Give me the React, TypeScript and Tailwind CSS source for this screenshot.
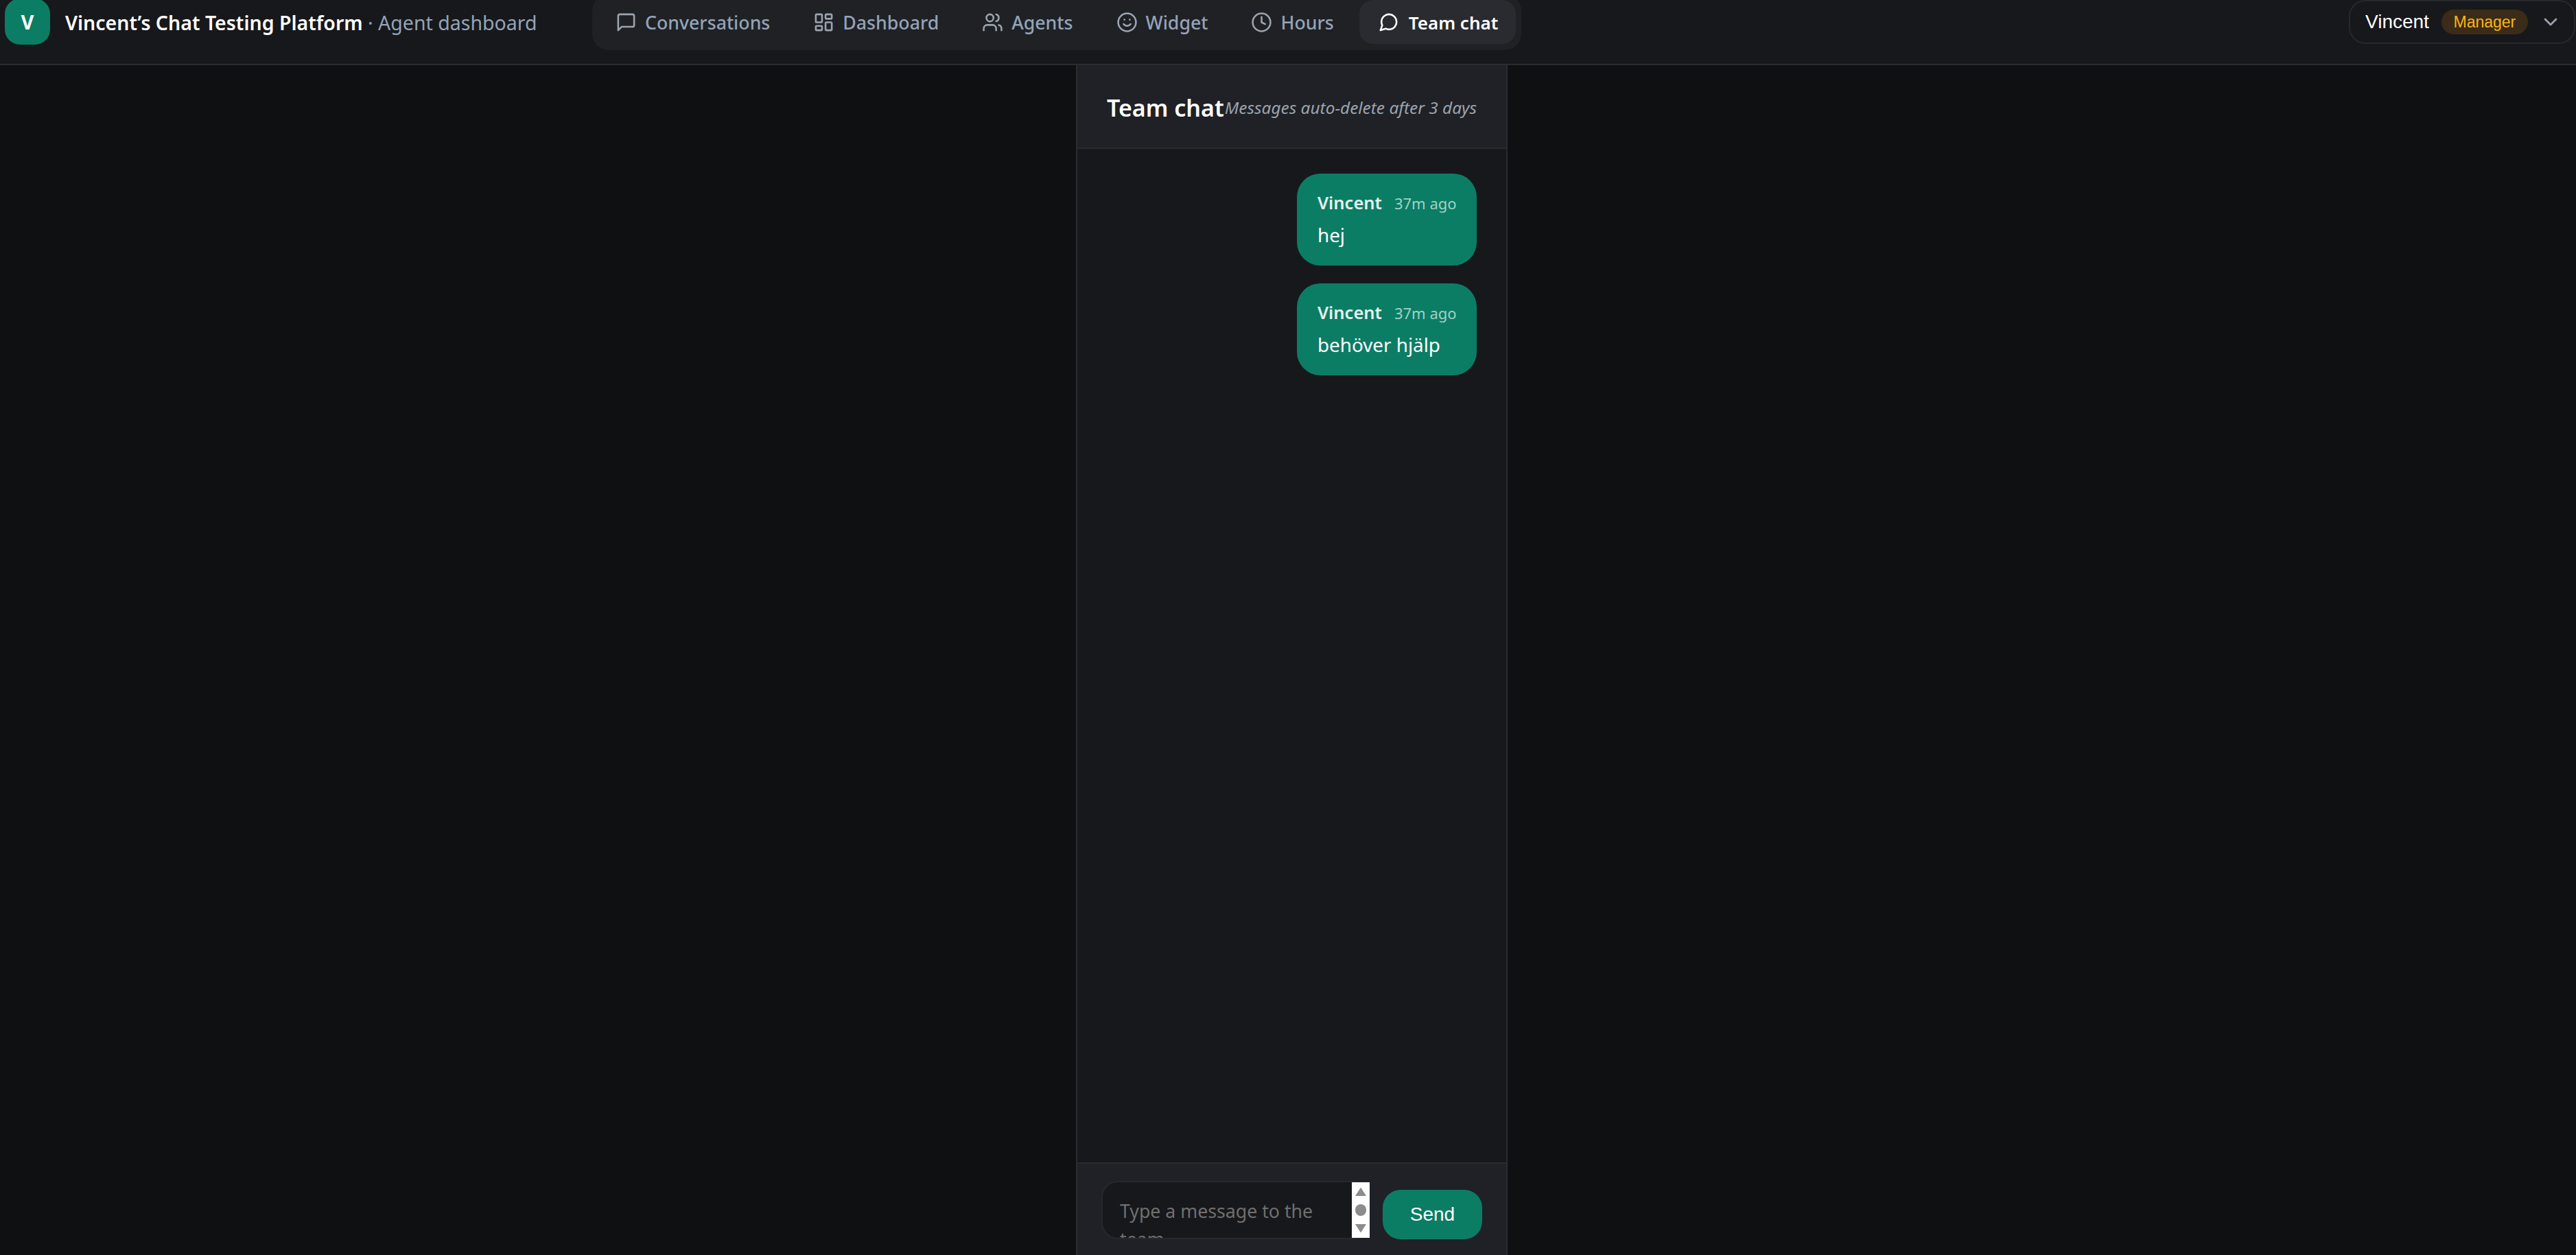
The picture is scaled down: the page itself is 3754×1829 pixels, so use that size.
import { LayoutDashboard, Users, Smile, Clock, ChevronDown } from "lucide-react";

const sans = "font-['Noto_Sans',sans-serif]";

function MsgSquare({ className }: { className?: string }) {
  return (
    <svg viewBox="0 0 24 24" fill="none" stroke="currentColor" strokeWidth="2" strokeLinecap="round" strokeLinejoin="round" className={className}>
      <path d="M21 15a2 2 0 0 1-2 2H7l-4 4V5a2 2 0 0 1 2-2h14a2 2 0 0 1 2 2z" />
    </svg>
  );
}

function MsgCircle({ className }: { className?: string }) {
  return (
    <svg viewBox="0 0 24 24" fill="none" stroke="currentColor" strokeWidth="2" strokeLinecap="round" strokeLinejoin="round" className={className}>
      <path d="M21 11.5a8.38 8.38 0 0 1-.9 3.8 8.5 8.5 0 0 1-7.6 4.7 8.38 8.38 0 0 1-3.8-.9L3 21l1.9-5.7a8.38 8.38 0 0 1-.9-3.8 8.5 8.5 0 0 1 4.7-7.6 8.38 8.38 0 0 1 3.8-.9h.5a8.48 8.48 0 0 1 8 8v.5z" />
    </svg>
  );
}

const tabs = [
  { label: "Conversations", Icon: MsgSquare },
  { label: "Dashboard", Icon: LayoutDashboard },
  { label: "Agents", Icon: Users },
  { label: "Widget", Icon: Smile },
  { label: "Hours", Icon: Clock },
];

function Bubble({ text }: { text: string }) {
  return (
    <div className="w-[262px] h-[134px] rounded-[34px] bg-[#0b7d65] px-[30px] pt-[26px] text-white">
      <div className="flex items-baseline gap-[18px] h-[32px] leading-[32px] whitespace-nowrap">
        <span className="text-[25.5px] font-semibold text-[#e6f2ef]">Vincent</span>
        <span className="text-[22px] text-[#a3d0c5]">37m ago</span>
      </div>
      <div className="mt-[8px] text-[27.8px] leading-[46px]">{text}</div>
    </div>
  );
}

export default function App() {
  return (
    <div className={`h-[1829px] w-[3754px] overflow-hidden flex flex-col bg-[#0e1012] ${sans}`}>
      <header className="h-[95px] shrink-0 flex items-start bg-[#17181b] border-b-2 border-[#2a2c30]">
        <div className="w-[863px] shrink-0 flex items-center pl-[7px]">
          <div className="-mt-[2px] w-[66px] h-[67px] rounded-[22px] bg-[#0b7d65] flex items-center justify-center text-white font-bold text-[29px]">
            V
          </div>
          <div className="ml-[22px] mt-[2px] text-[28.5px] whitespace-nowrap">
            <span className="font-semibold text-white">Vincent’s Chat Testing Platform</span>
            <span className="text-[#94a3b8]"> · Agent dashboard</span>
          </div>
        </div>
        <nav className="-mt-[8px] w-[1354px] h-[81px] shrink-0 rounded-[24px] bg-[#1f2125] p-[8px] flex gap-[11px]">
          {tabs.map(({ label, Icon }) => (
            <a key={label} className="h-[64px] px-[26px] rounded-[20px] flex items-center gap-[12px] text-[26.7px] font-medium text-[#94a3b8] whitespace-nowrap">
              <Icon className="w-[31px] h-[31px] shrink-0 text-[#9ca3af]" />
              <span className="mt-[3px]">{label}</span>
            </a>
          ))}
          <a className="h-[64px] w-[228px] shrink-0 pl-[27px] rounded-[20px] flex items-center gap-[14px] text-[26px] font-semibold text-white bg-[#2a2b30] whitespace-nowrap">
            <MsgCircle className="w-[31px] h-[31px] shrink-0" />
            <span className="mt-[3px]">Team chat</span>
          </a>
        </nav>
        <div className="ml-auto mr-[1px] h-[64px] w-[330px] rounded-[24px] border-2 border-[#26282c] flex items-center pl-[22px] font-['Liberation_Sans',sans-serif]">
          <span className="text-[28px] text-white">Vincent</span>
          <span className="ml-[18px] h-[36px] w-[126px] rounded-full bg-[#3a2c18] text-[#fbb415] text-[23px] leading-[36px] text-center">Manager</span>
          <ChevronDown className="ml-[17px] w-[32px] h-[32px] text-[#9ca3af]" />
        </div>
      </header>
      <main className="flex-1 min-h-0 flex pl-[1568px]">
        <section className="w-[629px] h-full flex flex-col border-x-2 border-[#2a2c30] bg-[#17181b]">
          <div className="h-[122px] shrink-0 flex items-center justify-between pl-[43px] pr-[43px] pt-[5px] bg-[#1f2126] border-b-2 border-[#2a2c30]">
            <span className="text-[34px] font-semibold text-white whitespace-nowrap">Team chat</span>
            <span className="text-[24.4px] italic text-[#9ca3af] whitespace-nowrap">Messages auto-delete after 3 days</span>
          </div>
          <div className="flex-1 min-h-0 flex flex-col items-end gap-[26px] pt-[36px] pr-[43px]">
            <Bubble text="hej" />
            <Bubble text="behöver hjälp" />
          </div>
          <div className="h-[135px] shrink-0 bg-[#1f2126] border-t-2 border-[#2a2c30] flex items-start pl-[35px] pt-[25px]">
            <div className="relative w-[391px] h-[85px]">
              <textarea
                readOnly
                placeholder="Type a message to the team"
                className="block w-full h-full resize-none overflow-hidden rounded-[24px] border-2 border-[#26282c] bg-[#17181b] pl-[25px] pr-[60px] pt-[21px] text-[26.7px] leading-[41px] placeholder:text-[#6f6f6f] outline-none"
              />
              <div className="absolute right-0 top-[2px] w-[26px] h-[81px] bg-white flex flex-col items-center justify-between py-[7px]">
                <svg viewBox="0 0 16 13" className="w-[16px] h-[13px]"><path d="M8 0.5 L16 13 H0 Z" fill="#8c8c8c" /></svg>
                <div className="w-[16px] h-[17px] rounded-full bg-[#8c8c8c]" />
                <svg viewBox="0 0 16 13" className="w-[16px] h-[13px]"><path d="M0 0 H16 L8 12.5 Z" fill="#8c8c8c" /></svg>
              </div>
            </div>
            <button className="ml-[19px] mt-[13px] w-[145px] h-[72px] rounded-[26px] bg-[#0b7d65] text-white text-[28px] font-['Liberation_Sans',sans-serif]">
              Send
            </button>
          </div>
        </section>
      </main>
    </div>
  );
}
